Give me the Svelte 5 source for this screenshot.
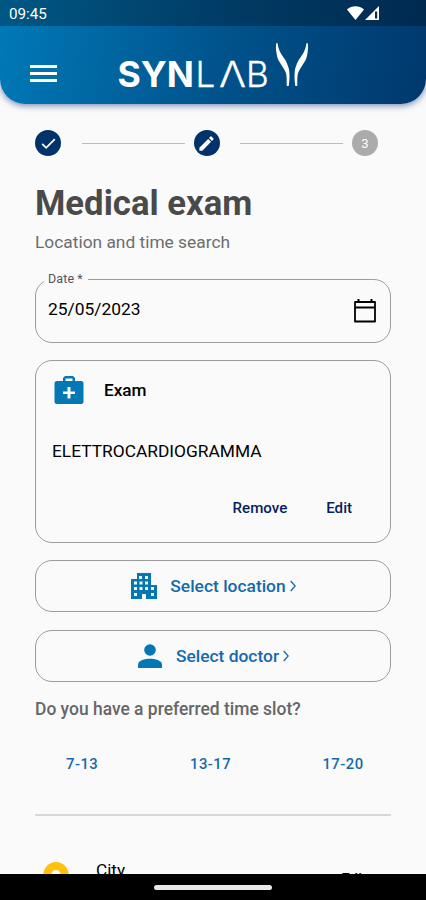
<script lang="ts">
	const slots = ['7-13', '13-17', '17-20'];
	const windows = [
		[8, 3], [14, 3], [3, 8.5], [8.5, 8.5], [14, 8.5], [3, 14], [8.5, 14], [14, 14], [20, 14], [3, 20], [20, 20]
	];
</script>

<div class="screen">
	<header>
		<div class="status">
			<span class="clock">09:45</span>
			<svg class="signals" viewBox="0 0 34 16">
				<path d="M0 3.500C5-.8 12-.8 17 3.500L8.500 14Z" fill="#fff" />
				<path d="M32 0V14H18Z" fill="#fff" />
				<path d="M28 5.500h2.200v7H28Z" fill="#003052" />
			</svg>
		</div>
		<div class="toolbar">
			<button class="menu" aria-label="Menu"><i></i><i></i><i></i></button>
			<svg class="logo" viewBox="0 0 194 60">
				<text class="heavy" x="-.5" y="46" textLength="76.500" lengthAdjust="spacingAndGlyphs">SYN</text>
				<text class="thin" x="77.500" y="46">L</text>
				<text class="thin" x="101" y="46" textLength="27" lengthAdjust="spacingAndGlyphs">Λ</text>
				<text class="thin" x="128" y="46">B</text>
				<path d="M158.200 2.300C157.900 5 157.800 8 158.300 10.700C158.800 14 159.200 16.500 160.500 19.300C162 22 163.200 23.600 164.700 26C166.500 29 168 31 168.400 34C168.800 37 168.700 41 168.700 45H170.700C171.300 41 171.700 37 171.400 32.300C171.200 29.500 171 27.500 170 25.200C169 22.500 168.500 20.800 167 18.500C165 15.500 163.300 13.500 162 10.700C160.500 8 160 5 159.600 2.300Z" />
				<path transform="matrix(-1 0 0 1 348 0)" d="M158.200 2.300C157.900 5 157.800 8 158.300 10.700C158.800 14 159.200 16.500 160.500 19.300C162 22 163.200 23.600 164.700 26C166.500 29 168 31 168.400 34C168.800 37 168.700 41 168.700 45H170.700C171.300 41 171.700 37 171.400 32.300C171.200 29.500 171 27.500 170 25.200C169 22.500 168.500 20.800 167 18.500C165 15.500 163.300 13.500 162 10.700C160.500 8 160 5 159.600 2.300Z" />
			</svg>
		</div>
	</header>

	<main>
		<div class="stepper">
			<div class="step">
				<svg viewBox="0 0 24 24"><path d="M4 12.500 9 17.500 20 6.500" fill="none" stroke="#fff" stroke-width="2.200" /></svg>
			</div>
			<span class="line"></span>
			<div class="step">
				<svg viewBox="0 0 24 24" fill="#fff">
					<path d="M3 17.250V21h3.750L17.810 9.940l-3.750-3.750L3 17.250ZM20.710 7.040a1 1 0 0 0 0-1.410l-2.340-2.340a1 1 0 0 0-1.410 0l-1.830 1.830 3.750 3.750 1.830-1.830Z" />
				</svg>
			</div>
			<span class="line"></span>
			<div class="step pending">3</div>
		</div>

		<h1>Medical exam</h1>
		<p class="subtitle">Location and time search</p>

		<div class="field">
			<span class="label">Date *</span>
			<span class="date">25/05/2023</span>
			<svg class="calendar" viewBox="0 0 24 26" fill="none" stroke="#000">
				<path d="M2 4h20v19.500H2ZM2 9.500h20" stroke-width="1.800" stroke-linejoin="round" />
				<path d="M5.500 1v3M18.500 1v3" stroke-width="2" />
			</svg>
		</div>

		<section class="card">
			<div class="card-title">
				<svg viewBox="0 0 30 30">
					<path fill="#0577b3" fill-rule="evenodd" d="M11 1h8l2 2v3h6a2.500 2.500 0 0 1 2.500 2.500v18A2.500 2.500 0 0 1 27 29H3a2.500 2.500 0 0 1-2.500-2.500v-18A2.500 2.500 0 0 1 3 6h6V3ZM11.500 3.500V6h7V3.500ZM13.500 12v4.500H9v2.600h4.500v4.500h3v-4.500H21v-2.600h-4.500V12Z" />
				</svg>
				<span>Exam</span>
			</div>
			<p class="exam">ELETTROCARDIOGRAMMA</p>
			<div class="actions">
				<button class="remove">Remove</button>
				<button class="edit">Edit</button>
			</div>
		</section>

		<button class="select">
			<svg class="building" viewBox="0 0 26 26">
				<path fill="#0577b3" d="M6 0h14v12h6v14H15v-5h-4v5H0V6h6Z" />
				<g fill="#fafafa">
					{#each windows as [x, y]}
						<rect x={x} y={y} width="3" height="3" />
					{/each}
				</g>
			</svg>
			<span class="location">Select location</span>
			<svg class="chevron" viewBox="0 0 6 12"><path d="M.7 1 5.200 6 .7 11" /></svg>
		</button>
		<button class="select">
			<svg class="person" viewBox="0 0 24 24" fill="#0577b3">
				<circle cx="12" cy="6" r="5.800" />
				<path d="M0 24v-3.500C0 16.500 7 14.800 12 14.800s12 1.700 12 5.700V24Z" />
			</svg>
			<span class="doctor">Select doctor</span>
			<svg class="chevron" viewBox="0 0 6 12"><path d="M.7 1 5.200 6 .7 11" /></svg>
		</button>

		<h2>Do you have a preferred time slot?</h2>
		<div class="slots">
			{#each slots as slot}
				<button>{slot}</button>
			{/each}
		</div>

		<hr />

		<div class="city">
			<svg viewBox="0 0 26 34">
				<path fill="#ffc10e" fill-rule="evenodd" d="M13 0a12.600 12.600 0 0 1 12.600 12.600C25.600 22 13 34 13 34S.4 22 .4 12.600A12.600 12.600 0 0 1 13 0Zm0 8a4.700 4.700 0 1 0 0 9.400A4.700 4.700 0 0 0 13 8Z" />
			</svg>
			<span class="city-name">City</span>
			<span class="city-edit">Edit</span>
		</div>
	</main>

	<footer><span></span></footer>
</div>

<style>
	:global(body) {
		background: #fafafa;
	}

	.screen {
		display: flex;
		flex-direction: column;
		width: 426px;
		height: 900px;
		overflow: hidden;
		background: #fafafa;
		font-family: Roboto, sans-serif;
		color: #000;
	}

	button {
		padding: 0;
		border: 0;
		background: none;
		font: inherit;
		letter-spacing: inherit;
		color: inherit;
	}

	svg {
		display: block;
		flex: none;
	}

	header {
		flex: none;
		height: 104px;
		overflow: hidden;
		border-radius: 0 0 25px 25px;
		background: linear-gradient(100deg, #007ab8 0%, #00538c 52%, #00386d 100%);
		box-shadow: 0 2px 6px rgba(0, 40, 120, 0.5);
	}

	.status {
		display: flex;
		align-items: center;
		justify-content: space-between;
		box-sizing: border-box;
		height: 26px;
		padding: 1px 45px 0 9px;
		background: rgba(0, 0, 0, 0.28);
	}

	.clock {
		font-size: 15.200px;
		line-height: 26px;
		color: #fff;
	}

	.signals {
		width: 34px;
		height: 16px;
	}

	.toolbar {
		display: flex;
		height: 78px;
		padding-left: 30px;
	}

	.menu {
		display: flex;
		flex-direction: column;
		gap: 4px;
		width: 27px;
		margin-top: 39px;
	}

	.menu i {
		height: 3px;
		background: #fff;
	}

	.logo {
		width: 194px;
		height: 60px;
		margin: 15px 0 0 61px;
		overflow: visible;
		fill: #fff;
	}

	.heavy {
		font: 700 35px Inter, sans-serif;
	}

	.thin {
		font: 300 35px Inter, sans-serif;
		stroke: #fff;
		stroke-width: 0.3;
	}

	main {
		display: flex;
		flex-direction: column;
		flex: 1;
		min-height: 0;
		padding: 0 35px;
		overflow: hidden;
	}

	.stepper {
		display: flex;
		align-items: center;
		justify-content: space-between;
		flex: none;
		height: 26px;
		margin: 26px 13px 0 0;
	}

	.step {
		display: flex;
		align-items: center;
		justify-content: center;
		width: 26px;
		height: 26px;
		border-radius: 50%;
		background: #00336a;
	}

	.step svg {
		width: 19px;
		height: 19px;
	}

	.step.pending {
		background: #ababab;
		color: #fff;
		font-size: 13px;
	}

	.line {
		width: 103px;
		height: 1px;
		margin-left: 12px;
		background: #bdbdbd;
	}

	h1 {
		margin: 27px 0 0;
		font-size: 34.700px;
		line-height: 40px;
		font-weight: 700;
		color: #4a4a4a;
		white-space: nowrap;
	}

	.subtitle {
		margin: 8px 0 0;
		font-size: 17.350px;
		line-height: 22px;
		color: #6d6d6d;
	}

	.field {
		position: relative;
		display: flex;
		justify-content: space-between;
		flex: none;
		box-sizing: border-box;
		height: 64px;
		margin-top: 26px;
		padding: 18px 13px 0 12px;
		border: 1px solid #9c9c9c;
		border-radius: 17px;
	}

	.label {
		position: absolute;
		top: -9px;
		left: 8px;
		padding: 0 5px 0 4px;
		background: #fafafa;
		font-size: 12.500px;
		line-height: 16px;
		letter-spacing: 0.1px;
		color: #555;
	}

	.date {
		font-size: 17.400px;
		line-height: 23px;
	}

	.calendar {
		width: 24px;
		height: 26px;
	}

	.card {
		flex: none;
		box-sizing: border-box;
		height: 183px;
		margin-top: 17px;
		padding: 14px 16px 0;
		border: 1px solid #9c9c9c;
		border-radius: 17px;
	}

	.card-title {
		display: flex;
		align-items: center;
		gap: 20px;
		height: 30px;
		font-size: 17.200px;
		font-weight: 500;
	}

	.card-title svg {
		width: 30px;
		height: 30px;
		margin-left: 2px;
	}

	.exam {
		margin: 34px 0 0;
		font-size: 17.350px;
		line-height: 24px;
	}

	.actions {
		display: flex;
		justify-content: flex-end;
		gap: 39px;
		margin: 33px 22px 0 0;
		font-size: 15.100px;
		line-height: 24px;
		font-weight: 500;
		color: #051f5c;
	}

	.select {
		display: flex;
		align-items: center;
		justify-content: center;
		flex: none;
		box-sizing: border-box;
		height: 52px;
		margin-top: 17px;
		padding-left: 1px;
		border: 1px solid #9c9c9c;
		border-radius: 17px;
		font-size: 17.400px;
		font-weight: 500;
		color: #1569aa;
	}

	.select + .select {
		margin-top: 18px;
		padding-bottom: 1px;
	}

	.building {
		width: 26px;
		height: 26px;
		margin-right: 13px;
	}

	.person {
		width: 24px;
		height: 24px;
		margin-right: 14px;
	}

	.chevron {
		width: 6px;
		height: 12px;
		margin-left: 4px;
		fill: none;
		stroke: #1569aa;
		stroke-width: 1.300;
	}

	h2 {
		margin: 16px 0 0;
		font-size: 17.450px;
		line-height: 22px;
		font-weight: 500;
		color: #666;
		white-space: nowrap;
	}

	.slots {
		display: grid;
		grid-template-columns: 32px 40px 42px;
		justify-content: space-between;
		margin: 33px 27px 0 31px;
		font-size: 14.800px;
		line-height: 22px;
		font-weight: 500;
		letter-spacing: 0.5px;
		color: #1569aa;
	}

	.slots button {
		white-space: nowrap;
	}

	hr {
		flex: none;
		width: 100%;
		height: 2px;
		margin: 39px 0 0;
		border: 0;
		background: #d7d7d7;
	}

	.city {
		display: flex;
		flex: none;
		height: 58px;
		margin-top: 43px;
		padding: 0 24px 0 8px;
	}

	.city svg {
		width: 26px;
		height: 34px;
		margin-top: 3px;
	}

	.city-name {
		margin-left: 27px;
		font-size: 17.200px;
		line-height: 22px;
	}

	.city-edit {
		margin: 11px 0 0 auto;
		font-size: 15.100px;
		line-height: 19px;
		font-weight: 500;
	}

	footer {
		display: flex;
		align-items: center;
		justify-content: center;
		flex: none;
		height: 26px;
		background: #000;
	}

	footer span {
		width: 118px;
		height: 5px;
		border-radius: 3px;
		background: #e8e8e8;
	}
</style>
